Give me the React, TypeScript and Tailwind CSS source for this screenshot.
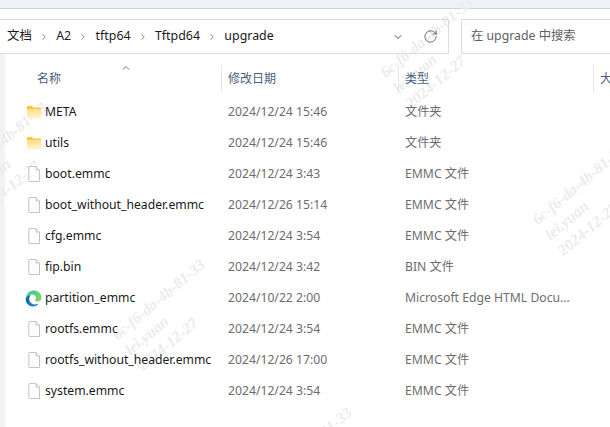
import React from 'react'
import { ChevronUp, ChevronDown, ChevronRight, RotateCw } from 'lucide-react'

const font = { fontFamily: '"Noto Sans", "Noto Sans CJK SC", sans-serif' }

interface Row {
  name: string
  date: string
  type: string
  icon: 'folder' | 'file' | 'edge'
}

const rows: Row[] = [
  { name: 'META', date: '2024/12/24 15:46', type: '文件夹', icon: 'folder' },
  { name: 'utils', date: '2024/12/24 15:46', type: '文件夹', icon: 'folder' },
  { name: 'boot.emmc', date: '2024/12/24 3:43', type: 'EMMC 文件', icon: 'file' },
  { name: 'boot_without_header.emmc', date: '2024/12/26 15:14', type: 'EMMC 文件', icon: 'file' },
  { name: 'cfg.emmc', date: '2024/12/24 3:54', type: 'EMMC 文件', icon: 'file' },
  { name: 'fip.bin', date: '2024/12/24 3:42', type: 'BIN 文件', icon: 'file' },
  { name: 'partition_emmc', date: '2024/10/22 2:00', type: 'Microsoft Edge HTML Docu...', icon: 'edge' },
  { name: 'rootfs.emmc', date: '2024/12/24 3:54', type: 'EMMC 文件', icon: 'file' },
  { name: 'rootfs_without_header.emmc', date: '2024/12/26 17:00', type: 'EMMC 文件', icon: 'file' },
  { name: 'system.emmc', date: '2024/12/24 3:54', type: 'EMMC 文件', icon: 'file' },
]

const crumbs = ['文档', 'A2', 'tftp64', 'Tftpd64', 'upgrade']

const FolderIcon = () => (
  <svg width="16" height="16" viewBox="0 0 16 16">
    <defs>
      <linearGradient id="fold" x1="0" y1="0" x2="0" y2="1">
        <stop offset="0" stopColor="#ffe08a" />
        <stop offset="1" stopColor="#fff3c9" />
      </linearGradient>
    </defs>
    <path d="M1 3C1 2.4 1.4 2 2 2H6L7.6 3.6H14C14.6 3.6 15 4 15 4.6V6H1Z" fill="#fcc63f" />
    <path d="M1 5H15V13C15 13.6 14.6 14 14 14H2C1.4 14 1 13.6 1 13Z" fill="url(#fold)" />
  </svg>
)

const FileIcon = () => (
  <svg width="16" height="16" viewBox="0 0 16 16" fill="none">
    <path d="M3.5 .5H10L13.5 4V15.5H3.5C3 15.5 2.8 15.3 2.8 14.8V1.2C2.8 .7 3 .5 3.5 .5Z" fill="#fdfdfd" stroke="#c4c4c4" />
    <path d="M10 .5V4H13.5" stroke="#c4c4c4" />
  </svg>
)

const EdgeIcon = () => (
  <svg width="17" height="17" viewBox="0 0 17 17">
    <defs>
      <linearGradient id="edgeTop" x1="0" y1="0" x2="1" y2="1">
        <stop offset="0" stopColor="#36c2a0" />
        <stop offset="1" stopColor="#7fdc5c" />
      </linearGradient>
      <linearGradient id="edgeBottom" x1="0" y1="0" x2="1" y2="1">
        <stop offset="0" stopColor="#0c59a4" />
        <stop offset="1" stopColor="#2b8fe0" />
      </linearGradient>
    </defs>
    <path d="M8.5 .5C13 .5 16.5 3.8 16.5 8C16.5 10.2 14.8 11.5 12.8 11.5C11 11.5 9.8 10.8 10 10C10.6 9.4 11 8.8 11 8C11 6.2 9.2 4.6 7 4.6C3.6 4.6 1.5 7 .7 9C.8 4.2 4.2 .5 8.5 .5Z" fill="url(#edgeTop)" />
    <path d="M.7 9C1.5 6.4 4 5 6.2 5C4.8 6 4.2 7.4 4.2 8.8C4.2 12 6.8 14.4 10 14.4C11.6 14.4 13 14 14 13.2C12.6 15.4 10.4 16.5 8 16.5C3.8 16.5 .6 13.2 .7 9Z" fill="url(#edgeBottom)" />
  </svg>
)

const icons = { folder: FolderIcon, file: FileIcon, edge: EdgeIcon }

// 水印, faint text stamped over the window
const Watermark = ({ left, top }: { left: number; top: number }) => (
  <div
    className="absolute origin-top-left -rotate-[40deg] text-[15.5px] leading-[20px] font-bold italic text-[#ececec] whitespace-nowrap pointer-events-none"
    style={{ left, top, fontFamily: '"Liberation Serif", serif' }}
  >
    <div>6c-f6-da-4b-81-33</div>
    <div>lei.yuan</div>
    <div>2024-12-27</div>
  </div>
)

export default function App() {
  return (
    <div className="relative w-[610px] h-[427px] overflow-hidden bg-white text-[12.2px]" style={font}>
      {/* window top */}
      <div className="h-[9px] bg-[#eff3f9] border-b border-[#c9d3de]" />
      <div className="h-[10px] bg-white" />

      {/* address bar + search */}
      <div className="relative z-10 flex gap-[12px] h-[35px]">
        <div className="flex items-center w-[449px] border-y border-r border-[#dcdcdc] pl-[7px] text-[12.4px] text-[#1b1b1b]">
          {crumbs.map((c, i) => (
            <React.Fragment key={c}>
              {i > 0 && <ChevronRight size={10} strokeWidth={2} className="mx-[7.2px] text-[#6e6e6e]" />}
              <span>{c}</span>
            </React.Fragment>
          ))}
          <ChevronDown size={12} className="ml-auto text-[#555]" />
          <RotateCw size={15} strokeWidth={1.4} className="ml-[19px] mr-[10px] text-[#555]" />
        </div>
        <div className="flex-1 flex items-center border-y border-l border-[#dcdcdc] pl-[9px] text-[#5f5f5f] text-[12.3px] whitespace-nowrap">
          在 upgrade 中搜索
        </div>
      </div>

      <div className="flex">
        <div className="w-[5px] h-[373px] bg-[#f3f3f3] shrink-0" />
        <div className="flex-1 min-w-0">
          {/* column header */}
          <div className="relative z-10 flex h-[43px] pt-[11px] text-[#4c607a] text-[12px]">
            <div className="relative w-[217px] pl-[32px] pt-[5px] border-r border-[#e5e5e5] h-[27px] shrink-0">
              名称
              <ChevronUp size={12} className="absolute left-[115px] -top-[3px] text-[#777]" />
            </div>
            <div className="w-[177px] pl-[6px] pt-[5px] border-r border-[#e5e5e5] h-[27px] shrink-0">修改日期</div>
            <div className="w-[195px] pl-[6px] pt-[5px] border-r border-[#e5e5e5] h-[27px] shrink-0">类型</div>
            <div className="pl-[6px] pt-[5px] whitespace-nowrap">大小</div>
          </div>

          {/* rows */}
          {rows.map((r) => {
            const Icon = icons[r.icon]
            return (
              <div key={r.name} className="relative z-10 flex items-center h-[31px] whitespace-nowrap">
                <div className="flex items-center w-[218px] pl-[20px] shrink-0 text-[#1a1a1a]">
                  <span className="flex justify-center w-[17px] mr-[3px]">
                    <Icon />
                  </span>
                  {r.name}
                </div>
                <div className="w-[177px] pl-[5px] shrink-0 text-[#6d6d6d]">{r.date}</div>
                <div className="pl-[5px] text-[#6d6d6d]">{r.type}</div>
              </div>
            )
          })}
        </div>
      </div>

      <Watermark left={376} top={67} />
      <Watermark left={-50} top={172} />
      <Watermark left={108} top={329} />
      <Watermark left={528} top={214} />
      <Watermark left={255} top={477} />
    </div>
  )
}
